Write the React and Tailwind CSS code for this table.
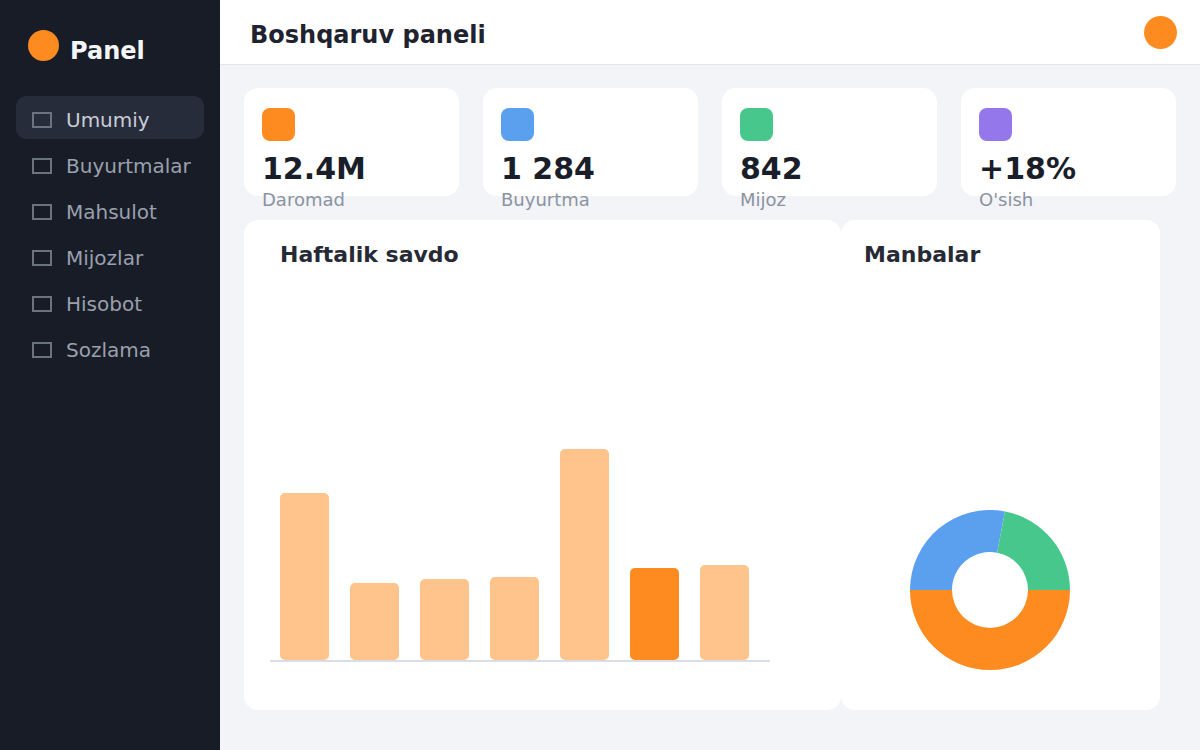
import React from "react";

const navItems = ["Umumiy", "Buyurtmalar", "Mahsulot", "Mijozlar", "Hisobot", "Sozlama"];

const stats = [
  { color: "bg-[#fe8b20]", value: "12.4M", label: "Daromad" },
  { color: "bg-[#5aa0ef]", value: "1 284", label: "Buyurtma" },
  { color: "bg-[#48c78c]", value: "842", label: "Mijoz" },
  { color: "bg-[#9577ec]", value: "+18%", label: "O'sish" },
];

const bars = [
  { h: 167, active: false },
  { h: 77, active: false },
  { h: 81, active: false },
  { h: 83, active: false },
  { h: 211, active: false },
  { h: 92, active: true },
  { h: 95, active: false },
];

function Donut() {
  return (
    <svg width="160" height="160" viewBox="0 0 160 160">
      <path d="M160 80 A80 80 0 0 1 0 80 L42 80 A38 38 0 0 0 118 80 Z" fill="#fe8b20" />
      <path d="M0 80 A80 80 0 0 1 94.99 1.42 L87.12 42.67 A38 38 0 0 0 42 80 Z" fill="#5aa0ef" />
      <path d="M94.99 1.42 A80 80 0 0 1 160 80 L118 80 A38 38 0 0 0 87.12 42.67 Z" fill="#48c78c" />
    </svg>
  );
}

export default function App() {
  return (
    <div className="flex h-[750px] w-[1200px] overflow-hidden font-['DejaVu_Sans',sans-serif]">
      <aside className="w-[220px] shrink-0 bg-[#181c27] px-4">
        <div className="mt-[30px] flex h-[31px] items-start pl-[12px]">
          <div className="h-[31px] w-[31px] shrink-0 rounded-full bg-[#fe8b20]" />
          <div className="ml-[11px] mt-[7px] text-[24px] font-bold leading-[28px] text-[#f4f5f7]">Panel</div>
        </div>
        <nav className="mt-[35px] flex flex-col gap-[3px]">
          {navItems.map((item, i) => (
            <div
              key={item}
              className={
                i === 0
                  ? "flex h-[43px] items-center rounded-[10px] bg-[#272c3a] pl-4 pt-[4px]"
                  : "flex h-[43px] items-center rounded-[10px] pl-4 pt-[4px]"
              }
            >
              <div className="h-[16px] w-[20px] shrink-0 border-2 border-[#6b7280]" />
              <span
                className={
                  i === 0
                    ? "ml-[14px] whitespace-nowrap text-[20px] leading-[24px] text-[#c9cdd6]"
                    : "ml-[14px] whitespace-nowrap text-[20px] leading-[24px] text-[#9aa0ad]"
                }
              >
                {item}
              </span>
            </div>
          ))}
        </nav>
      </aside>

      <main className="flex flex-1 flex-col bg-[#f3f4f7]">
        <header className="flex h-[65px] shrink-0 items-center justify-between border-b border-[#e3e5ea] bg-white pl-[30px] pr-[23px]">
          <h1 className="pt-[5px] text-[24px] font-bold leading-[28px] text-[#1f2330]">Boshqaruv paneli</h1>
          <div className="h-[33px] w-[33px] rounded-full bg-[#fe8b20]" />
        </header>

        <div className="px-6 pt-[23px]">
          <div className="grid grid-cols-4 gap-6">
            {stats.map((s) => (
              <div key={s.label} className="h-[108px] rounded-[14px] bg-white pl-[18px] pt-[20px]">
                <div className={"h-[33px] w-[33px] rounded-[8px] " + s.color} />
                <div className="mt-[9px] text-[30px] font-bold leading-[37px] text-[#1a1e2a]">{s.value}</div>
                <div className="pt-[2px] text-[18px] leading-[22px] text-[#8b93a1]">{s.label}</div>
              </div>
            ))}
          </div>

          <div className="mt-6 flex">
            <div className="flex h-[490px] w-[597px] flex-col rounded-[14px] bg-white">
              <h2 className="px-[36px] pt-[22px] text-[22px] font-bold leading-[26px] text-[#262a35]">Haftalik savdo</h2>
              <div className="flex-1" />
              <div className="mb-[48px] ml-[26px] flex w-[500px] items-end gap-[21px] border-b-2 border-[#d9dde5] pl-[10px]">
                {bars.map((b, i) => (
                  <div
                    key={i}
                    className={
                      b.active
                        ? "w-[49px] rounded-[5px] bg-[#fe8b20]"
                        : "w-[49px] rounded-[5px] bg-[#fec48c]"
                    }
                    style={{ height: b.h + "px" }}
                  />
                ))}
              </div>
            </div>

            <div className="flex h-[490px] w-[319px] flex-col rounded-[14px] bg-white pb-6 pl-[23px] pr-6">
              <h2 className="pt-[22px] text-[22px] font-bold leading-[26px] text-[#262a35]">Manbalar</h2>
              <div className="flex flex-1 items-end">
                <div className="mb-[16px] ml-[46px]">
                  <Donut />
                </div>
              </div>
            </div>
          </div>
        </div>
      </main>
    </div>
  );
}
